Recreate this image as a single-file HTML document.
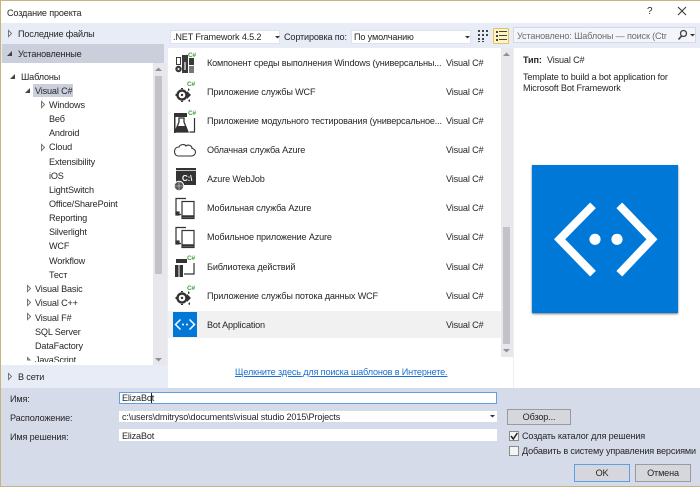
<!DOCTYPE html>
<html><head><meta charset="utf-8"><style>
html,body{margin:0;padding:0}
body{width:700px;height:487px;position:relative;overflow:hidden;background:#fff;font-family:"Liberation Sans",sans-serif;font-size:9.1px;letter-spacing:-.15px;color:#262626}
#w{position:absolute;left:0;top:0;width:700px;height:487px;filter:blur(.3px)}
.a{position:absolute}
.t{position:absolute;white-space:nowrap;line-height:12px}
.r{position:absolute;left:0;top:0}
.b{position:absolute;background:#d6d7dc;border:1px solid #9a9a9a;box-sizing:border-box;text-align:center;white-space:nowrap;line-height:14px}
svg{position:absolute;overflow:visible}
</style></head><body><div id="w">
<div class="a" style="left:0;top:0;width:700px;height:1px;background:#c8b27f"></div>
<div class="t" style="left:7px;top:6.500px">Создание проекта</div>
<div class="t" style="left:647px;top:5.500px;font-size:10px">?</div>

<!-- panels -->
<div class="a" style="left:1px;top:23px;width:699px;height:25px;background:#e8ecf6"></div>
<div class="a" style="left:1px;top:23px;width:166px;height:342px;background:#e8ecf6"></div>
<div class="a" style="left:1px;top:63px;width:166px;height:302px;background:#fff"></div>
<div class="a" style="left:2px;top:44px;width:162px;height:19px;background:#cbcfdc"></div>
<div class="a" style="left:1px;top:365px;width:166px;height:23px;background:#e8ecf6"></div>
<div class="a" style="left:153px;top:63px;width:14px;height:302px;background:#e8e8ec"></div>
<div class="a" style="left:155px;top:76px;width:7px;height:198px;background:#c2c3c9"></div>
<div class="a" style="left:167px;top:48px;width:1px;height:340px;background:#e8ecf6"></div>
<div class="a" style="left:501px;top:48px;width:13px;height:309px;background:#e8e8ec"></div>
<div class="a" style="left:503px;top:227px;width:7px;height:117px;background:#c2c3c9"></div>
<div class="a" style="left:513px;top:48px;width:1px;height:340px;background:#eeeef6"></div>
<div class="a" style="left:168px;top:311px;width:333px;height:27px;background:#f1f1f1"></div>
<div class="a" style="left:0;top:388px;width:700px;height:99px;background:#d6dbe9"></div>
<div class="a" style="left:0;top:0;width:1px;height:487px;background:#c8b27f"></div>
<div class="a" style="left:0;top:486px;width:700px;height:1px;background:#c8b27f"></div>

<!-- tree text -->
<div class="t" style="left:18px;top:27.500px">Последние файлы</div>
<div class="t" style="left:18px;top:47.500px">Установленные</div>
<div class="t" style="left:21px;top:70.500px">Шаблоны</div>
<div class="a" style="left:33px;top:84px;width:40px;height:13px;background:#cbcfdc"></div>
<div class="t" style="left:35px;top:84.500px">Visual C#</div>
<div class="t" style="left:49px;top:98.500px">Windows</div>
<div class="t" style="left:49px;top:112.500px">Веб</div>
<div class="t" style="left:49px;top:126.500px">Android</div>
<div class="t" style="left:49px;top:140.500px">Cloud</div>
<div class="t" style="left:49px;top:155.500px">Extensibility</div>
<div class="t" style="left:49px;top:169.500px">iOS</div>
<div class="t" style="left:49px;top:183.500px">LightSwitch</div>
<div class="t" style="left:49px;top:197.500px">Office/SharePoint</div>
<div class="t" style="left:49px;top:211.500px">Reporting</div>
<div class="t" style="left:49px;top:225.500px">Silverlight</div>
<div class="t" style="left:49px;top:239.500px">WCF</div>
<div class="t" style="left:49px;top:254.500px">Workflow</div>
<div class="t" style="left:49px;top:268.500px">Тест</div>
<div class="t" style="left:35px;top:282.500px">Visual Basic</div>
<div class="t" style="left:35px;top:296.500px">Visual C++</div>
<div class="t" style="left:35px;top:311.500px">Visual F#</div>
<div class="t" style="left:35px;top:325.500px">SQL Server</div>
<div class="t" style="left:35px;top:339.500px">DataFactory</div>
<div class="a" style="left:35px;top:354px;width:60px;height:8px;overflow:hidden"><div class="t" style="left:0;top:0">JavaScript</div></div>
<div class="t" style="left:18px;top:370.500px">В сети</div>

<!-- toolbar -->
<div class="a" style="left:170px;top:30px;width:110px;height:14px;background:#fff;box-sizing:border-box;border:1px solid #dfe2ea"></div>
<div class="t" style="left:173px;top:31px">.NET Framework 4.5.2</div>
<div class="t" style="left:284px;top:31px">Сортировка по:</div>
<div class="a" style="left:351px;top:30px;width:120px;height:14px;background:#fff;box-sizing:border-box;border:1px solid #dfe2ea"></div>
<div class="t" style="left:354px;top:31px">По умолчанию</div>
<div class="a" style="left:493px;top:28px;width:16px;height:16px;background:#fdf4bf;box-sizing:border-box;border:1px solid #e5c365"></div>
<div class="a" style="left:513px;top:27px;width:183px;height:16px;background:#f4f5fa;box-sizing:border-box;border:1px solid #d5d9e6"></div>
<div class="t" style="left:517px;top:30px;color:#6d6d6d;width:153px;overflow:hidden">Установлено: Шаблоны — поиск (Ctr</div>

<!-- list text -->
<div class="t" style="left:207px;top:57px">Компонент среды выполнения Windows (универсальны...</div>
<div class="t" style="left:207px;top:86px">Приложение службы WCF</div>
<div class="t" style="left:207px;top:115px">Приложение модульного тестирования (универсальное...</div>
<div class="t" style="left:207px;top:144px">Облачная служба Azure</div>
<div class="t" style="left:207px;top:173px">Azure WebJob</div>
<div class="t" style="left:207px;top:202px">Мобильная служба Azure</div>
<div class="t" style="left:207px;top:231px">Мобильное приложение Azure</div>
<div class="t" style="left:207px;top:261px">Библиотека действий</div>
<div class="t" style="left:207px;top:290px">Приложение службы потока данных WCF</div>
<div class="t" style="left:207px;top:319px">Bot Application</div>
<div class="t" style="left:446px;top:57px">Visual C#</div>
<div class="t" style="left:446px;top:86px">Visual C#</div>
<div class="t" style="left:446px;top:115px">Visual C#</div>
<div class="t" style="left:446px;top:144px">Visual C#</div>
<div class="t" style="left:446px;top:173px">Visual C#</div>
<div class="t" style="left:446px;top:202px">Visual C#</div>
<div class="t" style="left:446px;top:231px">Visual C#</div>
<div class="t" style="left:446px;top:261px">Visual C#</div>
<div class="t" style="left:446px;top:290px">Visual C#</div>
<div class="t" style="left:446px;top:319px">Visual C#</div>
<div class="t" style="left:235px;top:365.500px;color:#1a6fd0;text-decoration:underline">Щелкните здесь для поиска шаблонов в Интернете.</div>

<!-- right panel -->
<div class="t" style="left:523px;top:53.500px"><b>Тип:</b></div>
<div class="t" style="left:547px;top:53.500px">Visual C#</div>
<div class="t" style="left:523px;top:70.500px">Template to build a bot application for</div>
<div class="t" style="left:523px;top:81.500px">Microsoft Bot Framework</div>
<div class="a" style="left:532px;top:165px;width:146px;height:148px;background:#0078d7;box-shadow:0 1px 2px #777"></div>

<!-- bottom form -->
<div class="t" style="left:10px;top:392.500px">Имя:</div>
<div class="t" style="left:10px;top:411.500px">Расположение:</div>
<div class="t" style="left:10px;top:430.500px">Имя решения:</div>
<div class="a" style="left:119px;top:392px;width:378px;height:12px;background:#fff;box-sizing:border-box;border:1px solid #5f9fe6"></div>
<div class="a" style="left:119px;top:411px;width:378px;height:11px;background:#fff"></div>
<div class="a" style="left:119px;top:429px;width:378px;height:12px;background:#fff"></div>
<div class="t" style="left:122px;top:392px">ElizaBot</div>
<div class="t" style="left:122px;top:411px">c:\users\dmitryso\documents\visual studio 2015\Projects</div>
<div class="t" style="left:122px;top:430px">ElizaBot</div>
<div class="b" style="left:507px;top:409px;width:64px;height:16px">Обзор...</div>
<div class="a" style="left:509px;top:431px;width:10px;height:10px;background:#f4f4f4;box-sizing:border-box;border:1px solid #8a8a8a"></div>
<div class="a" style="left:509px;top:446px;width:10px;height:10px;background:#f4f4f4;box-sizing:border-box;border:1px solid #8a8a8a"></div>
<div class="t" style="left:522px;top:429.500px">Создать каталог для решения</div>
<div class="t" style="left:522px;top:444.500px">Добавить в систему управления версиями</div>
<div class="b" style="left:574px;top:464px;width:56px;height:18px;border-color:#5f9fe6;line-height:16px">OK</div>
<div class="b" style="left:635px;top:464px;width:56px;height:18px;line-height:16px">Отмена</div>

<svg class="r" width="700" height="487" viewBox="0 0 700 487">
<path d="M678 7l8 8M686 7l-8 8" stroke="#333" stroke-width="1" fill="none"/>
<!-- tree arrows -->
<g fill="#fff" stroke="#777" stroke-width="1">
<path d="M8.500 30.500l3 3-3 3z"/><path d="M8.500 373.500l3 3-3 3z"/>
<path d="M41.500 101.500l3 3-3 3z"/><path d="M41.500 144.500l3 3-3 3z"/>
<path d="M27.500 285.500l3 3-3 3z"/><path d="M27.500 299.500l3 3-3 3z"/><path d="M27.500 313.500l3 3-3 3z"/><path d="M27.500 357.500l2.500 2.500h-2.500z"/>
</g>
<g fill="#444"><path d="M7 56l5-5v5z"/><path d="M10 79l5-5v5z"/><path d="M25 93l5-5v5z"/></g>
<!-- scroll arrows -->
<g fill="#8f8f96"><path d="M155 71l3.500-3.500 3.500 3.500z"/><path d="M155 358l3.500 3.500 3.500-3.500z"/><path d="M503 56l3.500-3.500 3.500 3.500z"/><path d="M503 349l3.500 3.500 3.500-3.500z"/></g>
<!-- combo arrows -->
<g fill="#333"><path d="M275 36h5l-2.500 2.500z"/><path d="M465 36h5l-2.500 2.500z"/><path d="M490 415h5l-2.500 2.500z"/><path d="M690 34h5l-2.500 2.500z"/></g>
<!-- view toggle -->
<g fill="#444"><path d="M478 30h2v2h-2zM482 30h2v2h-2zM486 30h2v2h-2zM478 34h2v2h-2zM482 34h2v2h-2zM486 34h2v2h-2zM478 38h2v2h-2zM482 38h2v2h-2zM478 41h2v1h-2zM482 41h2v1h-2z"/>
<path d="M496 31h2v2h-2zM496 35h2v2h-2zM496 39h2v2h-2zM499 31h8v1h-8zM499 35h8v1h-8zM499 39h8v1h-8z"/></g>
<!-- search -->
<circle cx="683.500" cy="33.500" r="3" fill="none" stroke="#444" stroke-width="1.300"/><path d="M681.500 36l-3 3.500" stroke="#444" stroke-width="1.600"/>
<!-- check -->
<path d="M511 436l2.300 3 4-6" fill="none" stroke="#222" stroke-width="1.500"/>
<!-- cursor -->
<path d="M151.500 393v10" stroke="#222"/>

<!-- C# marks -->
<g font-family="Liberation Sans,sans-serif" font-size="6.500" font-weight="bold" fill="#3f9c3f">
<text x="188" y="57">C#</text><text x="187" y="86">C#</text><text x="188" y="115">C#</text><text x="187" y="260">C#</text><text x="187" y="290">C#</text>
</g>
<!-- icon 1 -->
<g fill="#3a3a3a"><path d="M176.500 57.500h4v7h-4z" fill="none" stroke="#3a3a3a"/><path d="M182 55h6v18h-6zM189 58h5v7h-5z"/><path d="M189 66h5v7h-5z" fill="#777"/><circle cx="178.500" cy="69" r="3.200"/><circle cx="178.500" cy="69" r="1" fill="#fff"/><path d="M184 62h2v8h-2z" fill="#aaa"/></g>
<!-- gear app -->
<g><circle cx="182" cy="95" r="4.500" fill="none" stroke="#333" stroke-width="2.400"/><circle cx="182" cy="95" r="1.200" fill="#333"/><path d="M187 91l4 4-4 4zM188 88l2 2-2 1zM188 101l2-2v3z" fill="#333"/><path d="M175.500 95h1M182 89v-1M182 101v1" stroke="#333" stroke-width="2"/></g>
<g transform="translate(0,203)"><circle cx="182" cy="95" r="4.500" fill="none" stroke="#333" stroke-width="2.400"/><circle cx="182" cy="95" r="1.200" fill="#333"/><path d="M187 91l4 4-4 4zM188 88l2 2-2 1zM188 101l2-2v3z" fill="#333"/><path d="M175.500 95h1M182 89v-1M182 101v1" stroke="#333" stroke-width="2"/></g>
<!-- test icon -->
<path d="M174 113h13v4h-13zM174 117h1.500v16h-1.500z" fill="#333"/><path d="M179 118h5v4l4 10h-13l4-10z" fill="#fff" stroke="#333" stroke-width="1.300"/><path d="M177 126h9l2 6h-13z" fill="#333"/><path d="M194.500 118v14h-5" fill="none" stroke="#333" stroke-width="1.200"/>
<!-- cloud -->
<path d="M178 156h13c3 0 4.500-2 4.500-4s-2-3.500-3.500-3.500c0-3-4-4.500-6-2.500-1-2-6-2-7 1-3 0-4.500 2-4.500 4.500 0 2.500 1.500 4.500 3.500 4.500z" fill="#fff" stroke="#333" stroke-width="1.100"/>
<!-- webjob -->
<path d="M176 168h20v17h-20z" fill="#333"/><path d="M176 170.500h20" stroke="#fff" stroke-width=".8"/><text x="182" y="181" font-family="Liberation Sans,sans-serif" font-size="8" font-weight="bold" fill="#fff">C:\</text>
<circle cx="179" cy="186" r="4.800" fill="#555" stroke="#fff"/><path d="M175 186h8M179 182v8" stroke="#ddd" stroke-width=".6"/>
<!-- mobile -->
<g fill="none" stroke="#333" stroke-width="1.200"><path d="M186 198.500h-10v16h5"/><rect x="182" y="201.500" width="12" height="17" fill="#fff"/><path d="M182.500 216.500h11" stroke-width="2.500"/><rect x="176" y="212" width="3" height="3" fill="#333"/></g>
<g transform="translate(0,29)" fill="none" stroke="#333" stroke-width="1.200"><path d="M186 198.500h-10v16h5"/><rect x="182" y="201.500" width="12" height="17" fill="#fff"/><path d="M182.500 216.500h11" stroke-width="2.500"/><rect x="176" y="212" width="3" height="3" fill="#333"/></g>
<!-- library -->
<path d="M176 259h11v4h-11z" fill="#333"/><path d="M194 263v11h-10" fill="none" stroke="#333" stroke-width="1.200"/><path d="M175 265h3.500v12h-3.500zM179.500 265h3.500v12h-3.500z" fill="#333"/>
<!-- bot small -->
<rect x="173" y="312" width="24" height="25" fill="#0078d7"/>
<path d="M180.500 319.500l-5 5 5 5M189.500 319.500l5 5-5 5" fill="none" stroke="#fff" stroke-width="1.500"/><circle cx="183" cy="324.500" r="1" fill="#fff"/><circle cx="187" cy="324.500" r="1" fill="#fff"/>
<!-- bot large -->
<path d="M593 205.300L559.600 239.300L593 273.700M619.300 205.300L652 239.300L619.300 273.700" fill="none" stroke="#fff" stroke-width="8" stroke-linejoin="miter"/>
<circle cx="595" cy="239.300" r="5.600" fill="#fff"/><circle cx="617" cy="239.300" r="5.600" fill="#fff"/>
</svg>
</div></body></html>
